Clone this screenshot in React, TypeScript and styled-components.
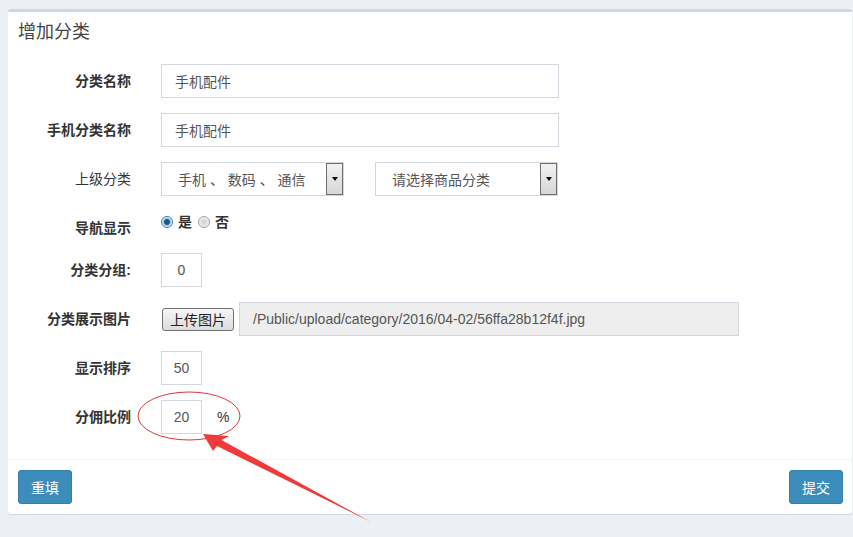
import React from "react";
import styled, { createGlobalStyle } from "styled-components";

const Global = createGlobalStyle`
  html, body { margin: 0; padding: 0; background: #ecf0f5; }
  body { font-family: "Liberation Sans", "Noto Sans CJK SC", sans-serif; font-size: 14px; color: #333; }
  * { box-sizing: border-box; }
`;

const Page = styled.div`
  position: relative;
  width: 853px;
  height: 537px;
  padding: 9px 1px 0 8px;
  overflow: hidden;
`;

const Box = styled.div`
  background: #fff;
  border-top: 3px solid #d2d6de;
  border-radius: 3px;
  box-shadow: 0 1px 1px rgba(0, 0, 0, 0.1);
`;

const Header = styled.div`
  padding: 10px 10px;
`;

const Title = styled.h3`
  margin: 0;
  font-size: 18px;
  line-height: 20px;
  font-weight: normal;
  color: #444;
`;

const Body = styled.div`
  padding: 12px 10px 10px;
`;

const Row = styled.div`
  display: grid;
  grid-template-columns: 113px 1fr;
  column-gap: 30px;
  margin-bottom: 15px;
  align-items: start;
`;

const Label = styled.label<{ $bold?: boolean }>`
  text-align: right;
  padding-top: 7px;
  line-height: 20px;
  font-weight: ${(p) => (p.$bold === false ? "normal" : "bold")};
  color: #333;
`;

const Controls = styled.div<{ $align?: string }>`
  display: flex;
  align-items: ${(p) => p.$align || "center"};
  gap: 5px;
`;

const TextInput = styled.div<{ $w: number; $center?: boolean; $readonly?: boolean }>`
  width: ${(p) => p.$w}px;
  height: 34px;
  border: 1px solid #d2d6de;
  background: ${(p) => (p.$readonly ? "#eee" : "#fff")};
  padding: 0 ${(p) => (p.$center ? 0 : 13)}px;
  display: flex;
  align-items: center;
  justify-content: ${(p) => (p.$center ? "center" : "flex-start")};
  color: #555;
  font-size: 14px;
`;

const Select = styled.div<{ $w: number }>`
  width: ${(p) => p.$w}px;
  height: 34px;
  border: 1px solid #d2d6de;
  display: flex;
  align-items: stretch;
  color: #555;
`;

const SelectText = styled.span`
  flex: 1;
  display: flex;
  align-items: center;
  padding-left: 16px;
  white-space: pre;
`;

const SelectArrow = styled.span`
  width: 17px;
  border: 1px solid #707070;
  background: linear-gradient(#f2f2f2, #d6d6d6);
  display: flex;
  align-items: center;
  justify-content: center;
  &::after {
    content: "";
    border-left: 3.5px solid transparent;
    border-right: 3.5px solid transparent;
    border-top: 4px solid #000;
  }
`;

const SelectGap = styled.div`
  width: 21px;
`;

const RadioGroup = styled.div`
  display: flex;
  align-items: center;
  line-height: 22px;
  height: 22px;
  font-weight: bold;
  color: #333;
`;

const Radio = styled.span<{ $checked?: boolean }>`
  width: 12px;
  height: 12px;
  border-radius: 50%;
  border: 1px solid ${(p) => (p.$checked ? "#3d7bad" : "#a0a0a0")};
  background: ${(p) =>
    p.$checked
      ? "radial-gradient(circle, #1d5987 0 2.5px, #9fc6e8 3.5px, #eaf2fa 5px)"
      : "radial-gradient(circle, #d8d8d8 0 2px, #f4f4f4 5px)"};
  margin-right: 5px;
  margin-left: ${(p) => (p.$checked ? 0 : 6)}px;
`;

const UploadButton = styled.button`
  width: 72px;
  height: 23px;
  margin-left: 1px;
  border: 1px solid #707070;
  border-radius: 3px;
  background: linear-gradient(#f6f6f6, #dcdcdc);
  font-family: "Liberation Sans", "Noto Sans CJK SC", sans-serif;
  font-size: 14px;
  color: #222;
  padding: 0;
`;

const Percent = styled.span`
  margin-left: 10px;
  color: #333;
`;

const Footer = styled.div`
  border-top: 1px solid #f4f4f4;
  padding: 10px 9px 10px 10px;
  display: flex;
  justify-content: space-between;
`;

const PrimaryButton = styled.button`
  height: 34px;
  padding: 0 12px;
  border: 1px solid #367fa9;
  border-radius: 3px;
  background: #3c8dbc;
  color: #fff;
  font-family: "Liberation Sans", "Noto Sans CJK SC", sans-serif;
  font-size: 14px;
`;

const Annotation = styled.svg`
  position: absolute;
  left: 0;
  top: 0;
  pointer-events: none;
`;

export default function App() {
  return (
    <Page>
      <Global />
      <Box>
        <Header>
          <Title>增加分类</Title>
        </Header>
        <Body>
          <Row>
            <Label>分类名称</Label>
            <Controls>
              <TextInput $w={398}>手机配件</TextInput>
            </Controls>
          </Row>
          <Row>
            <Label>手机分类名称</Label>
            <Controls>
              <TextInput $w={398}>手机配件</TextInput>
            </Controls>
          </Row>
          <Row>
            <Label $bold={false}>上级分类</Label>
            <Controls>
              <Select $w={183}>
                <SelectText>{"手机 、 数码 、 通信"}</SelectText>
                <SelectArrow />
              </Select>
              <SelectGap />
              <Select $w={183}>
                <SelectText>请选择商品分类</SelectText>
                <SelectArrow />
              </Select>
            </Controls>
          </Row>
          <Row>
            <Label>导航显示</Label>
            <RadioGroup>
              <Radio $checked />
              是
              <Radio />
              否
            </RadioGroup>
          </Row>
          <Row>
            <Label>分类分组:</Label>
            <Controls>
              <TextInput $w={41} $center>0</TextInput>
            </Controls>
          </Row>
          <Row>
            <Label>分类展示图片</Label>
            <Controls>
              <UploadButton>上传图片</UploadButton>
              <TextInput $w={500} $readonly>
                /Public/upload/category/2016/04-02/56ffa28b12f4f.jpg
              </TextInput>
            </Controls>
          </Row>
          <Row>
            <Label>显示排序</Label>
            <Controls>
              <TextInput $w={41} $center>50</TextInput>
            </Controls>
          </Row>
          <Row>
            <Label>分佣比例</Label>
            <Controls>
              <TextInput $w={41} $center>20</TextInput>
              <Percent>%</Percent>
            </Controls>
          </Row>
        </Body>
        <Footer>
          <PrimaryButton>重填</PrimaryButton>
          <PrimaryButton>提交</PrimaryButton>
        </Footer>
      </Box>
      <Annotation width="853" height="537" viewBox="0 0 853 537">
        <ellipse cx="189" cy="416" rx="51" ry="24" fill="none" stroke="#e0353b" strokeWidth="1" />
        <polygon
          points="203,434 229,436 221.5,440 371,522 217,446 213,451"
          fill="#f03a3a"
        />
      </Annotation>
    </Page>
  );
}
